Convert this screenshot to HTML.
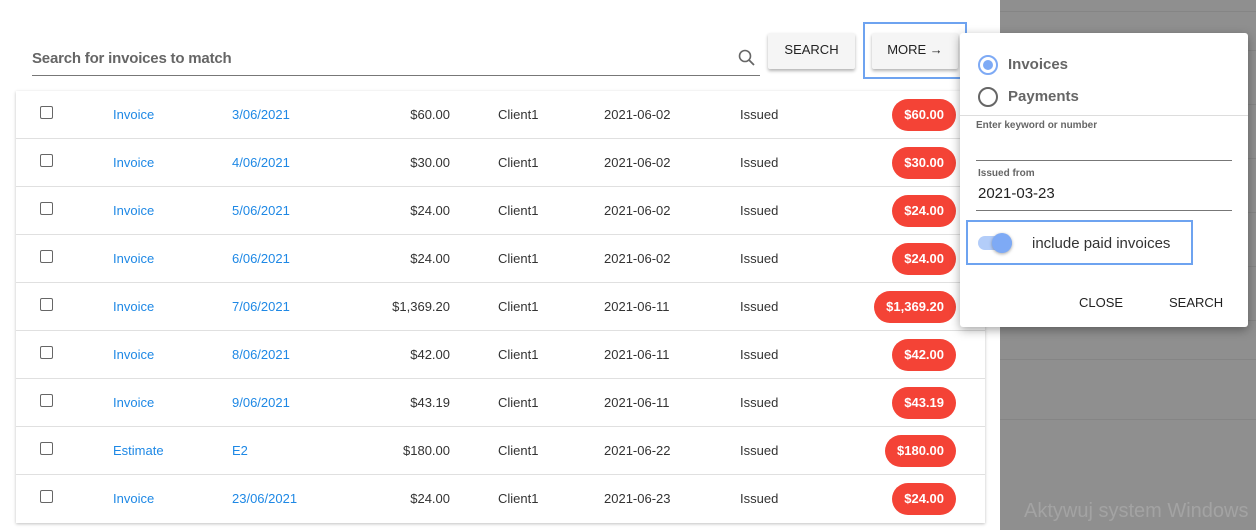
<!DOCTYPE html>
<html><head><style>
*{box-sizing:border-box;margin:0;padding:0}
body{width:1256px;height:530px;overflow:hidden;background:#fff;font-family:"Liberation Sans",Arial,sans-serif;position:relative}
.grey{position:absolute;left:1000px;top:0;width:256px;height:530px;background:#8f8f8f}
.gl{position:absolute;left:1000px;width:256px;height:1px;background:#858585}
.search{position:absolute;left:32px;top:48px;width:728px;height:28px;border-bottom:1px solid #777;font-size:15px;color:#666;padding-top:2px;font-weight:bold;letter-spacing:-0.2px}
.btn{position:absolute;top:33px;height:36px;background:#f5f5f5;box-shadow:0 2px 3px rgba(0,0,0,.3);border-radius:2px;font-size:13px;color:#222;text-align:center;line-height:34px}
.table{position:absolute;left:16px;top:91px;width:969px;box-shadow:0 1px 3px rgba(0,0,0,.25);background:#fff}
.row{height:48px;border-bottom:1px solid #e0e0e0;position:relative;font-size:13px;color:#333}
.row:last-child{border-bottom:none}
.row span{position:absolute;top:16px}
.cb{position:absolute;left:24px;top:15px;width:13px;height:13px;border:1px solid #666;border-radius:2px}
.lk{color:#1e88e5}
.amt{right:535px;text-align:right}
.badge{position:absolute;right:29px;top:8px;height:32px;line-height:32px;border-radius:16px;background:#f44336;color:#fff;font-weight:bold;font-size:13px;padding:0 12px}
.pop{position:absolute;left:960px;top:33px;width:288px;height:294px;background:#fff;border-radius:3px;box-shadow:0 3px 10px rgba(0,0,0,.35)}
.radio{position:absolute;left:18px;width:20px;height:20px;border-radius:50%;border:2px solid #666}
.lbl{position:absolute;left:48px;font-size:15px;color:#666;font-weight:bold}
.small{position:absolute;left:18px;font-size:10px;color:#666;font-weight:bold}
.line{position:absolute;left:16px;width:256px;height:1px;background:#777}
</style></head><body>
<div class="grey"></div>
<div class="gl" style="top:11px"></div><div class="gl" style="top:50px"></div><div class="gl" style="top:104px"></div><div class="gl" style="top:158px"></div><div class="gl" style="top:212px"></div><div class="gl" style="top:266px"></div><div class="gl" style="top:320px"></div><div class="gl" style="top:359px"></div><div class="gl" style="top:419px"></div>
<div style="position:absolute;left:1024px;top:500px;font-size:20px;color:#a3a3a3">Aktywuj system Windows</div>
<div class="search">Search for invoices to match</div>
<svg style="position:absolute;left:737px;top:48px" width="20" height="20" viewBox="0 0 20 20"><circle cx="8" cy="8" r="5.5" fill="none" stroke="#666" stroke-width="1.6"/><path d="M12 12l5 5" stroke="#666" stroke-width="1.8"/></svg>
<div class="btn" style="left:768px;width:87px">SEARCH</div>
<div class="btn" style="left:872px;width:86px">MORE →</div>
<div style="position:absolute;left:863px;top:22px;width:104px;height:57px;border:2px solid #6ea3f0"></div>
<div class="table">
<div class="row"><div class="cb"></div><span class="lk" style="left:97px">Invoice</span><span class="lk" style="left:216px">3/06/2021</span><span class="amt">$60.00</span><span style="left:482px">Client1</span><span style="left:588px">2021-06-02</span><span style="left:724px">Issued</span><div class="badge">$60.00</div></div>
<div class="row"><div class="cb"></div><span class="lk" style="left:97px">Invoice</span><span class="lk" style="left:216px">4/06/2021</span><span class="amt">$30.00</span><span style="left:482px">Client1</span><span style="left:588px">2021-06-02</span><span style="left:724px">Issued</span><div class="badge">$30.00</div></div>
<div class="row"><div class="cb"></div><span class="lk" style="left:97px">Invoice</span><span class="lk" style="left:216px">5/06/2021</span><span class="amt">$24.00</span><span style="left:482px">Client1</span><span style="left:588px">2021-06-02</span><span style="left:724px">Issued</span><div class="badge">$24.00</div></div>
<div class="row"><div class="cb"></div><span class="lk" style="left:97px">Invoice</span><span class="lk" style="left:216px">6/06/2021</span><span class="amt">$24.00</span><span style="left:482px">Client1</span><span style="left:588px">2021-06-02</span><span style="left:724px">Issued</span><div class="badge">$24.00</div></div>
<div class="row"><div class="cb"></div><span class="lk" style="left:97px">Invoice</span><span class="lk" style="left:216px">7/06/2021</span><span class="amt">$1,369.20</span><span style="left:482px">Client1</span><span style="left:588px">2021-06-11</span><span style="left:724px">Issued</span><div class="badge">$1,369.20</div></div>
<div class="row"><div class="cb"></div><span class="lk" style="left:97px">Invoice</span><span class="lk" style="left:216px">8/06/2021</span><span class="amt">$42.00</span><span style="left:482px">Client1</span><span style="left:588px">2021-06-11</span><span style="left:724px">Issued</span><div class="badge">$42.00</div></div>
<div class="row"><div class="cb"></div><span class="lk" style="left:97px">Invoice</span><span class="lk" style="left:216px">9/06/2021</span><span class="amt">$43.19</span><span style="left:482px">Client1</span><span style="left:588px">2021-06-11</span><span style="left:724px">Issued</span><div class="badge">$43.19</div></div>
<div class="row"><div class="cb"></div><span class="lk" style="left:97px">Estimate</span><span class="lk" style="left:216px">E2</span><span class="amt">$180.00</span><span style="left:482px">Client1</span><span style="left:588px">2021-06-22</span><span style="left:724px">Issued</span><div class="badge">$180.00</div></div>
<div class="row"><div class="cb"></div><span class="lk" style="left:97px">Invoice</span><span class="lk" style="left:216px">23/06/2021</span><span class="amt">$24.00</span><span style="left:482px">Client1</span><span style="left:588px">2021-06-23</span><span style="left:724px">Issued</span><div class="badge">$24.00</div></div>
</div>
<div class="pop">
<div class="radio" style="top:22px;border-color:#7eaaf5"><div style="position:absolute;left:3px;top:3px;width:10px;height:10px;border-radius:50%;background:#7eaaf5"></div></div>
<div class="lbl" style="top:23px">Invoices</div>
<div class="radio" style="top:54px"></div>
<div class="lbl" style="top:55px">Payments</div>
<div style="position:absolute;left:0;top:82px;width:288px;height:1px;background:#ddd"></div>
<div class="small" style="top:87px;left:16px">Enter keyword or number</div>
<div class="line" style="top:127px"></div>
<div class="small" style="top:135px">Issued from</div>
<div style="position:absolute;left:18px;top:152px;font-size:15px;color:#222">2021-03-23</div>
<div class="line" style="top:177px"></div>
<div style="position:absolute;left:6px;top:187px;width:227px;height:45px;border:2px solid #6ea3f0"></div>
<div style="position:absolute;left:18px;top:203px;width:34px;height:14px;border-radius:7px;background:#b3cdf9"></div>
<div style="position:absolute;left:32px;top:200px;width:20px;height:20px;border-radius:50%;background:#7eaaf5;box-shadow:0 1px 3px rgba(0,0,0,.35)"></div>
<div style="position:absolute;left:72px;top:202px;font-size:15px;color:#333">include paid invoices</div>
<div style="position:absolute;left:119px;top:262px;font-size:13px;color:#222">CLOSE</div>
<div style="position:absolute;left:209px;top:262px;font-size:13px;color:#222">SEARCH</div>
</div>
</body></html>
